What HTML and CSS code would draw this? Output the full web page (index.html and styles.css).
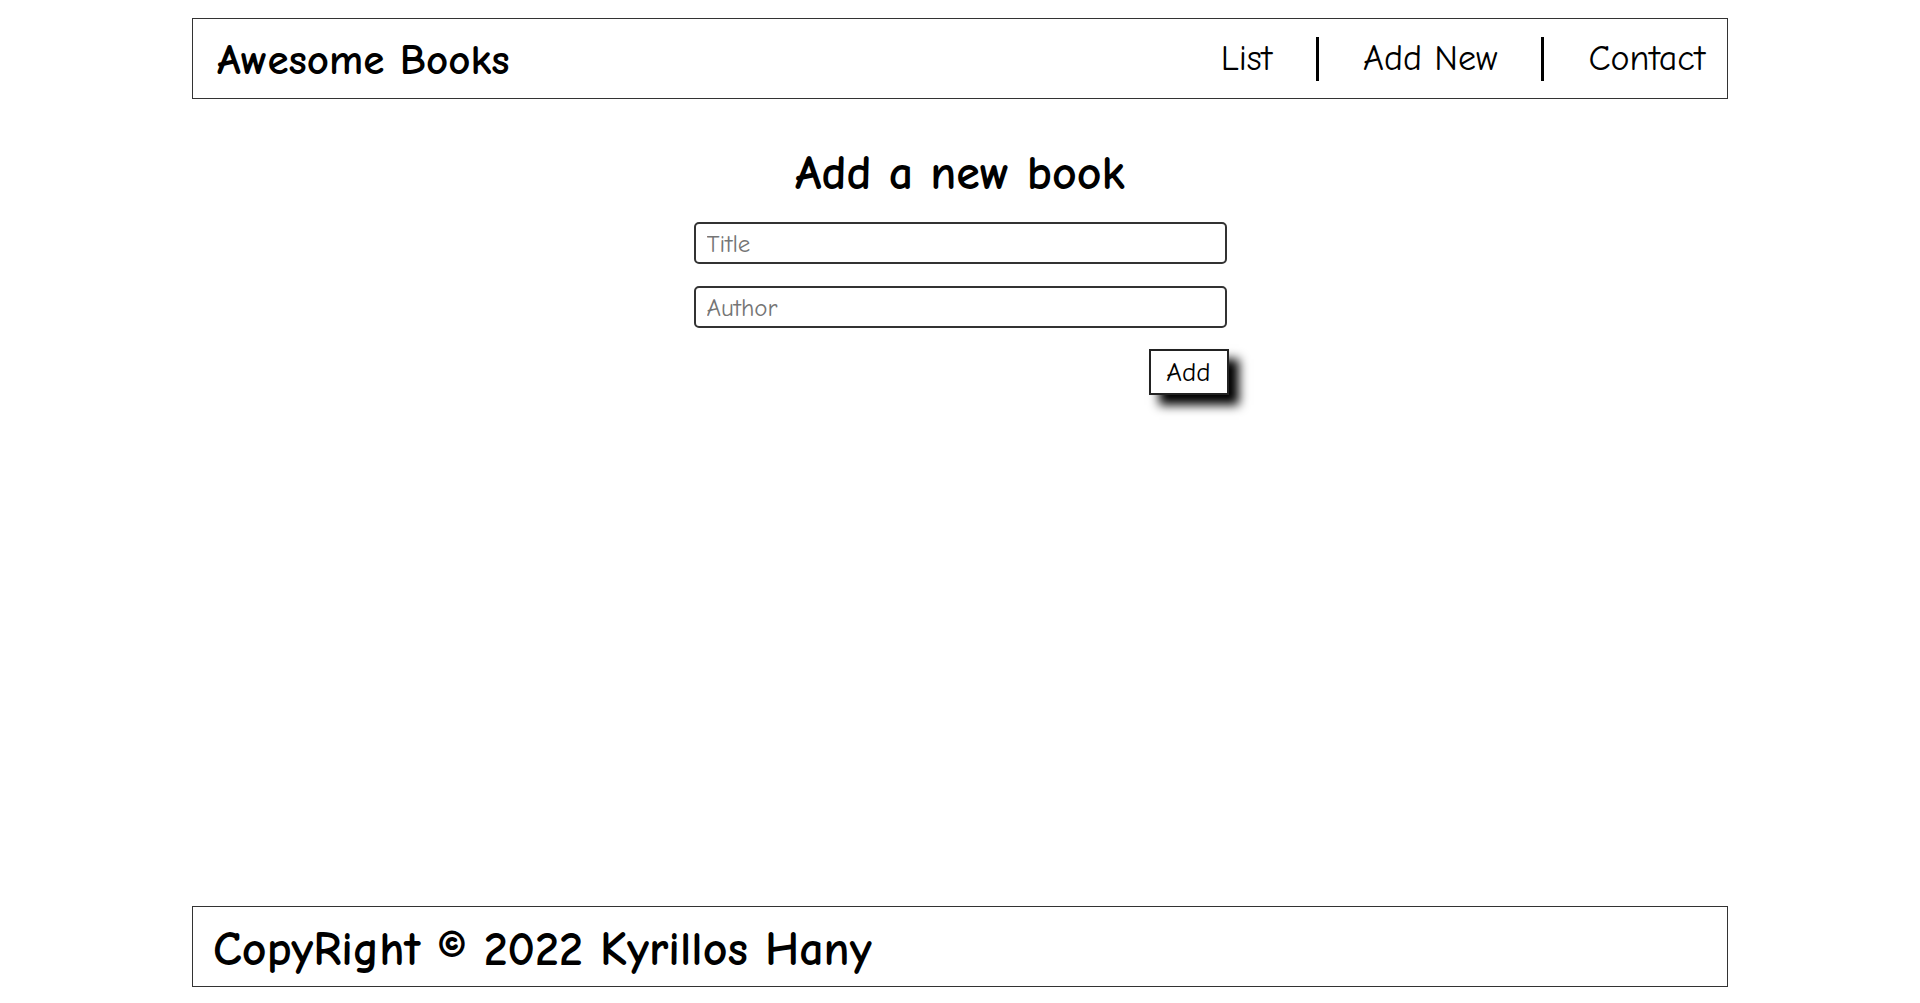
FILE: index.html
```html
<!DOCTYPE html>
<html lang="en">
<head>
<meta charset="utf-8">
<title>Awesome Books</title>
<link rel="stylesheet" href="styles.css">
</head>
<body>
<div class="page">
  <header class="topbar">
    <h1 class="brand">Awesome Books</h1>
    <nav>
      <ul class="nav-list">
        <li class="nav-item"><a href="#">List</a></li>
        <li class="nav-item"><a href="#">Add New</a></li>
        <li class="nav-item"><a href="#">Contact</a></li>
      </ul>
    </nav>
  </header>
  <main class="content">
    <h2 class="section-title">Add a new book</h2>
    <form class="book-form">
      <input class="field" type="text" placeholder="Title" autofocus>
      <input class="field" type="text" placeholder="Author">
      <button class="add-btn" type="button">Add</button>
    </form>
  </main>
  <footer class="footer">
    <p class="copy">CopyRight © 2022 Kyrillos Hany</p>
  </footer>
</div>
</body>
</html>
```
FILE: styles.css
```css
* { box-sizing: border-box; }
html, body { margin: 0; padding: 0; background: #fff; }
body {
  font-family: "Comic Sans MS", "Comic Neue", Lato, "DejaVu Sans", sans-serif;
  color: #000;
}
.page {
  min-height: 100vh;
  display: flex;
  flex-direction: column;
}
.topbar {
  width: 80%;
  margin: 18px auto 0;
  height: 81px;
  border: 1px solid #333;
  display: flex;
  align-items: center;
  justify-content: space-between;
  padding: 0 22px 0 24px;
}
.brand {
  margin: 0;
  font-size: 43px;
  font-weight: 700;
  line-height: 50px;
  padding-top: 2px;
}
.nav-list {
  display: flex;
  list-style: none;
  margin: 0;
  padding: 0;
}
.nav-item {
  padding: 0 44px;
  border-right: 3px solid #000;
  line-height: 44px;
  font-size: 36px;
}
.nav-item:last-child {
  border-right: none;
  padding-right: 0;
}
.nav-item a {
  color: #000;
  text-decoration: none;
}
.content {
  flex: 1;
  display: flex;
  flex-direction: column;
  align-items: center;
}
.section-title {
  margin: 47px 0 21px;
  font-size: 48px;
  font-weight: 700;
  line-height: 55px;
}
.book-form {
  width: 533px;
  display: flex;
  flex-direction: column;
  gap: 22px;
}
.field {
  width: 100%;
  height: 42px;
  border: 2px solid #333;
  border-radius: 5px;
  padding: 0 11px;
  font-family: inherit;
  font-size: 25px;
  color: #000;
  outline: none;
}
.field::placeholder { color: #757575; }
.add-btn {
  align-self: flex-end;
  margin-right: -2px;
  margin-top: -1px;
  width: 80px;
  height: 46px;
  background: #fff;
  border: 2px solid #222;
  font-family: inherit;
  font-size: 27px;
  color: #000;
  box-shadow: 10px 10px 10px #000;
  cursor: pointer;
}
.footer {
  width: 80%;
  margin: 0 auto 16px;
  height: 81px;
  border: 1px solid #333;
  display: flex;
  align-items: center;
  padding: 6px 20px 0;
}
.copy {
  margin: 0;
  font-size: 48px;
  font-weight: 700;
  line-height: 56px;
}
```
